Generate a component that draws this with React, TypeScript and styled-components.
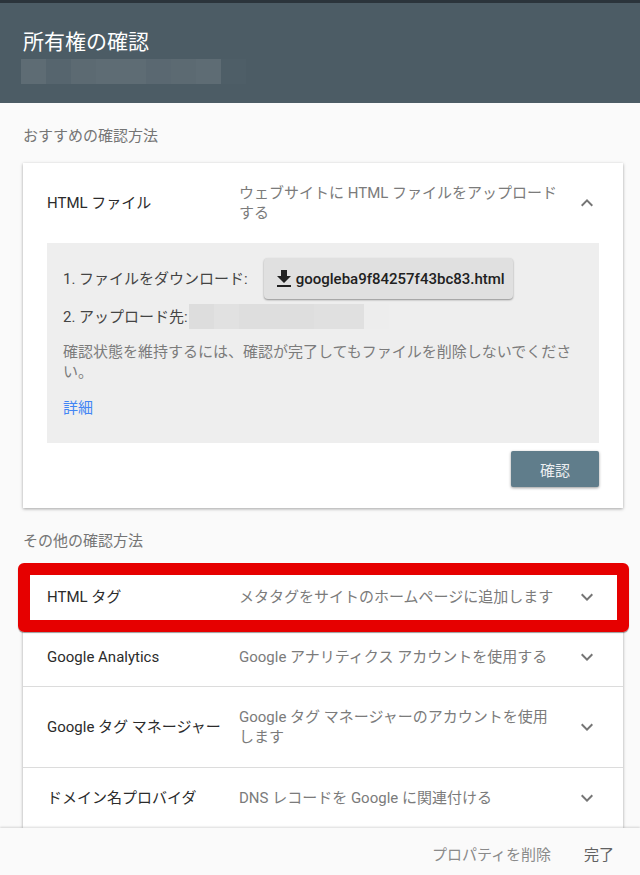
import styled, {createGlobalStyle} from "styled-components";

const GlobalStyle = createGlobalStyle`
  html, body {
    margin: 0;
    padding: 0;
    background: #fafafa;
  }
  * {
    box-sizing: border-box;
  }
`;

const otherMethods = [
    {title: "HTML タグ", desc: "メタタグをサイトのホームページに追加します", height: 58, marked: true},
    {title: "Google Analytics", desc: "Google アナリティクス アカウントを使用する", height: 59},
    {title: "Google タグ マネージャー", desc: "Google タグ マネージャーのアカウントを使用します", height: 81},
    {title: "ドメイン名プロバイダ", desc: "DNS レコードを Google に関連付ける", height: 60},
];

const headerCells = [0.1, 0.06, 0.09, 0.1, 0.1, 0.08, 0.09, 0.1, 0.015];
const pathCells = [0.07, 0.05, 0.065, 0.065, 0.065, 0.06, 0.06, 0.005];

const Chevron = ({up = false}: {up?: boolean}) => (
    <ChevronSvg viewBox="0 0 24 24">
        <path d={up ? "M7.4 15.4 12 10.8l4.6 4.6L18 14l-6-6-6 6z" : "M7.4 8.6 12 13.2l4.6-4.6L18 10l-6 6-6-6z"} fill="#757575"/>
    </ChevronSvg>
);

export default function App() {
    return (
        <Page>
            <GlobalStyle/>
            <TopStrip/>
            <Header>
                <Title>所有権の確認</Title>
                <Redacted>
                    {headerCells.map((a, i) => <Cell key={i} style={{background: `rgba(255,255,255,${a})`}}/>)}
                </Redacted>
            </Header>
            <Scroll>
                <SectionLabel>おすすめの確認方法</SectionLabel>
                <Card>
                    <Row $height={80}>
                        <RowTitle>HTML ファイル</RowTitle>
                        <RowDesc>ウェブサイトに HTML ファイルをアップロードする</RowDesc>
                        <Chevron up/>
                    </Row>
                    <Panel>
                        <DownloadLine>
                            <Step>1. ファイルをダウンロード:</Step>
                            <DownloadButton>
                                <svg width="24" height="24" viewBox="0 0 24 24">
                                    <path d="M19 9h-4V3H9v6H5l7 7 7-7zM5 18v2h14v-2H5z" fill="#212121"/>
                                </svg>
                                googleba9f84257f43bc83.html
                            </DownloadButton>
                        </DownloadLine>
                        <PathLine>
                            <Step>2. アップロード先:</Step>
                            <PathRedacted>
                                {pathCells.map((a, i) => <PathCell key={i} style={{background: `rgba(0,0,0,${a})`}}/>)}
                            </PathRedacted>
                        </PathLine>
                        <Note>確認状態を維持するには、確認が完了してもファイルを削除しないでください。</Note>
                        <MoreLink>詳細</MoreLink>
                    </Panel>
                    <CardActions>
                        <VerifyButton>確認</VerifyButton>
                    </CardActions>
                </Card>
                <SectionLabel $second>その他の確認方法</SectionLabel>
                <ListCard>
                    {otherMethods.map((m) => (
                        <ListRow key={m.title} $height={m.height} $marked={m.marked}>
                            <RowTitle>{m.title}</RowTitle>
                            <RowDesc>{m.desc}</RowDesc>
                            <Chevron/>
                            {m.marked && <RedMark/>}
                        </ListRow>
                    ))}
                </ListCard>
            </Scroll>
            <Footer>
                <FooterButton>プロパティを削除</FooterButton>
                <FooterButton $dark>完了</FooterButton>
            </Footer>
        </Page>
    );
}

const Page = styled.div`
  width: 640px;
  height: 875px;
  display: flex;
  flex-direction: column;
  overflow: hidden;
  background: #fafafa;
  font-family: Roboto, "Noto Sans CJK JP", sans-serif;
  font-size: 15px;
  color: #212121;
`;

const TopStrip = styled.div`
  height: 3px;
  flex: none;
  background: #2b343b;
`;

const Header = styled.header`
  height: 100px;
  flex: none;
  padding: 24px 0 0 23px;
  background: #4c5c65;
`;

const Title = styled.div`
  font-size: 21px;
  line-height: 30px;
  color: #fff;
`;

const Redacted = styled.div`
  display: flex;
  margin: 2px 0 0 -2px;
`;

const Cell = styled.div`
  width: 25px;
  height: 25px;
`;

const Scroll = styled.main`
  flex: 1;
  min-height: 0;
  overflow: hidden;
  padding: 0 17px 0 23px;
`;

const SectionLabel = styled.div<{$second?: boolean}>`
  height: 20px;
  margin: ${(p) => (p.$second ? "23px 0 19px" : "23px 0 17px")};
  line-height: 20px;
  color: #757575;
`;

const Card = styled.section`
  width: 600px;
  height: 345px;
  background: #fff;
  box-shadow: 0 1px 3px rgba(0, 0, 0, 0.35);
`;

const Row = styled.div<{$height: number}>`
  position: relative;
  display: flex;
  align-items: center;
  height: ${(p) => p.$height}px;
  padding: 0 24px;
`;

const ListRow = styled(Row)<{$marked?: boolean}>`
  padding-bottom: ${(p) => (p.$marked ? "3px" : "0")};
  border-bottom: 1px solid #dcdcdc;

  &:last-child {
    border-bottom: none;
  }
`;

const RowTitle = styled.div`
  flex: none;
  width: 192px;
  line-height: 20px;
  color: #2b2b2b;
`;

const RowDesc = styled.div`
  flex: 1;
  min-width: 0;
  padding-right: 16px;
  line-height: 20px;
  color: #7b7b7b;
`;

const ChevronSvg = styled.svg`
  flex: none;
  width: 24px;
  height: 24px;
`;

const Panel = styled.div`
  height: 200px;
  margin: 0 24px;
  padding: 15px 16px 0;
  background: #eeeeee;
`;

const DownloadLine = styled.div`
  display: flex;
  align-items: center;
  gap: 16px;
  height: 41px;
`;

const Step = styled.span`
  line-height: 20px;
  color: #444444;
`;

const DownloadButton = styled.button`
  display: flex;
  align-items: center;
  height: 41px;
  padding: 0 8px;
  border: none;
  border-radius: 4px;
  background: #e0e0e0;
  box-shadow: 0 1px 2px rgba(0, 0, 0, 0.4);
  font: 500 15px Roboto, "Noto Sans CJK JP", sans-serif;
  color: #212121;
`;

const PathLine = styled.div`
  display: flex;
  align-items: center;
  height: 25px;
  margin-top: 5px;
`;

const PathRedacted = styled.div`
  display: flex;
  margin-left: 1px;
`;

const PathCell = styled.div`
  width: 25px;
  height: 25px;
`;

const Note = styled.p`
  margin: 13px 0 0;
  line-height: 20px;
  color: #7b7b7b;
`;

const MoreLink = styled.a`
  display: block;
  margin-top: 16px;
  line-height: 20px;
  color: #4285f4;
`;

const CardActions = styled.div`
  display: flex;
  justify-content: flex-end;
  padding: 8px 24px 0;
`;

const VerifyButton = styled.button`
  width: 88px;
  height: 36px;
  border: none;
  border-radius: 2px;
  background: #607d8b;
  box-shadow: 0 1px 3px rgba(0, 0, 0, 0.4);
  font: 15px Roboto, "Noto Sans CJK JP", sans-serif;
  color: rgba(255, 255, 255, 0.9);
`;

const ListCard = styled.section`
  width: 600px;
  background: #fff;
  box-shadow: 0 1px 3px rgba(0, 0, 0, 0.35);
`;

const RedMark = styled.div`
  position: absolute;
  left: -5px;
  right: -6px;
  top: -7px;
  bottom: -5px;
  border: 12px solid #e60000;
  border-radius: 6px;
  box-shadow: 0 1px 1px rgba(0, 0, 0, 0.4);
`;

const Footer = styled.footer`
  position: relative;
  flex: none;
  display: flex;
  justify-content: flex-end;
  align-items: center;
  gap: 33px;
  height: 47px;
  padding: 6px 26px 0 0;
  background: #fafafa;
  box-shadow: 0 -1px 2px rgba(0, 0, 0, 0.15);
`;

const FooterButton = styled.span<{$dark?: boolean}>`
  line-height: 20px;
  color: ${(p) => (p.$dark ? "#616161" : "#8a8a8a")};
`;
